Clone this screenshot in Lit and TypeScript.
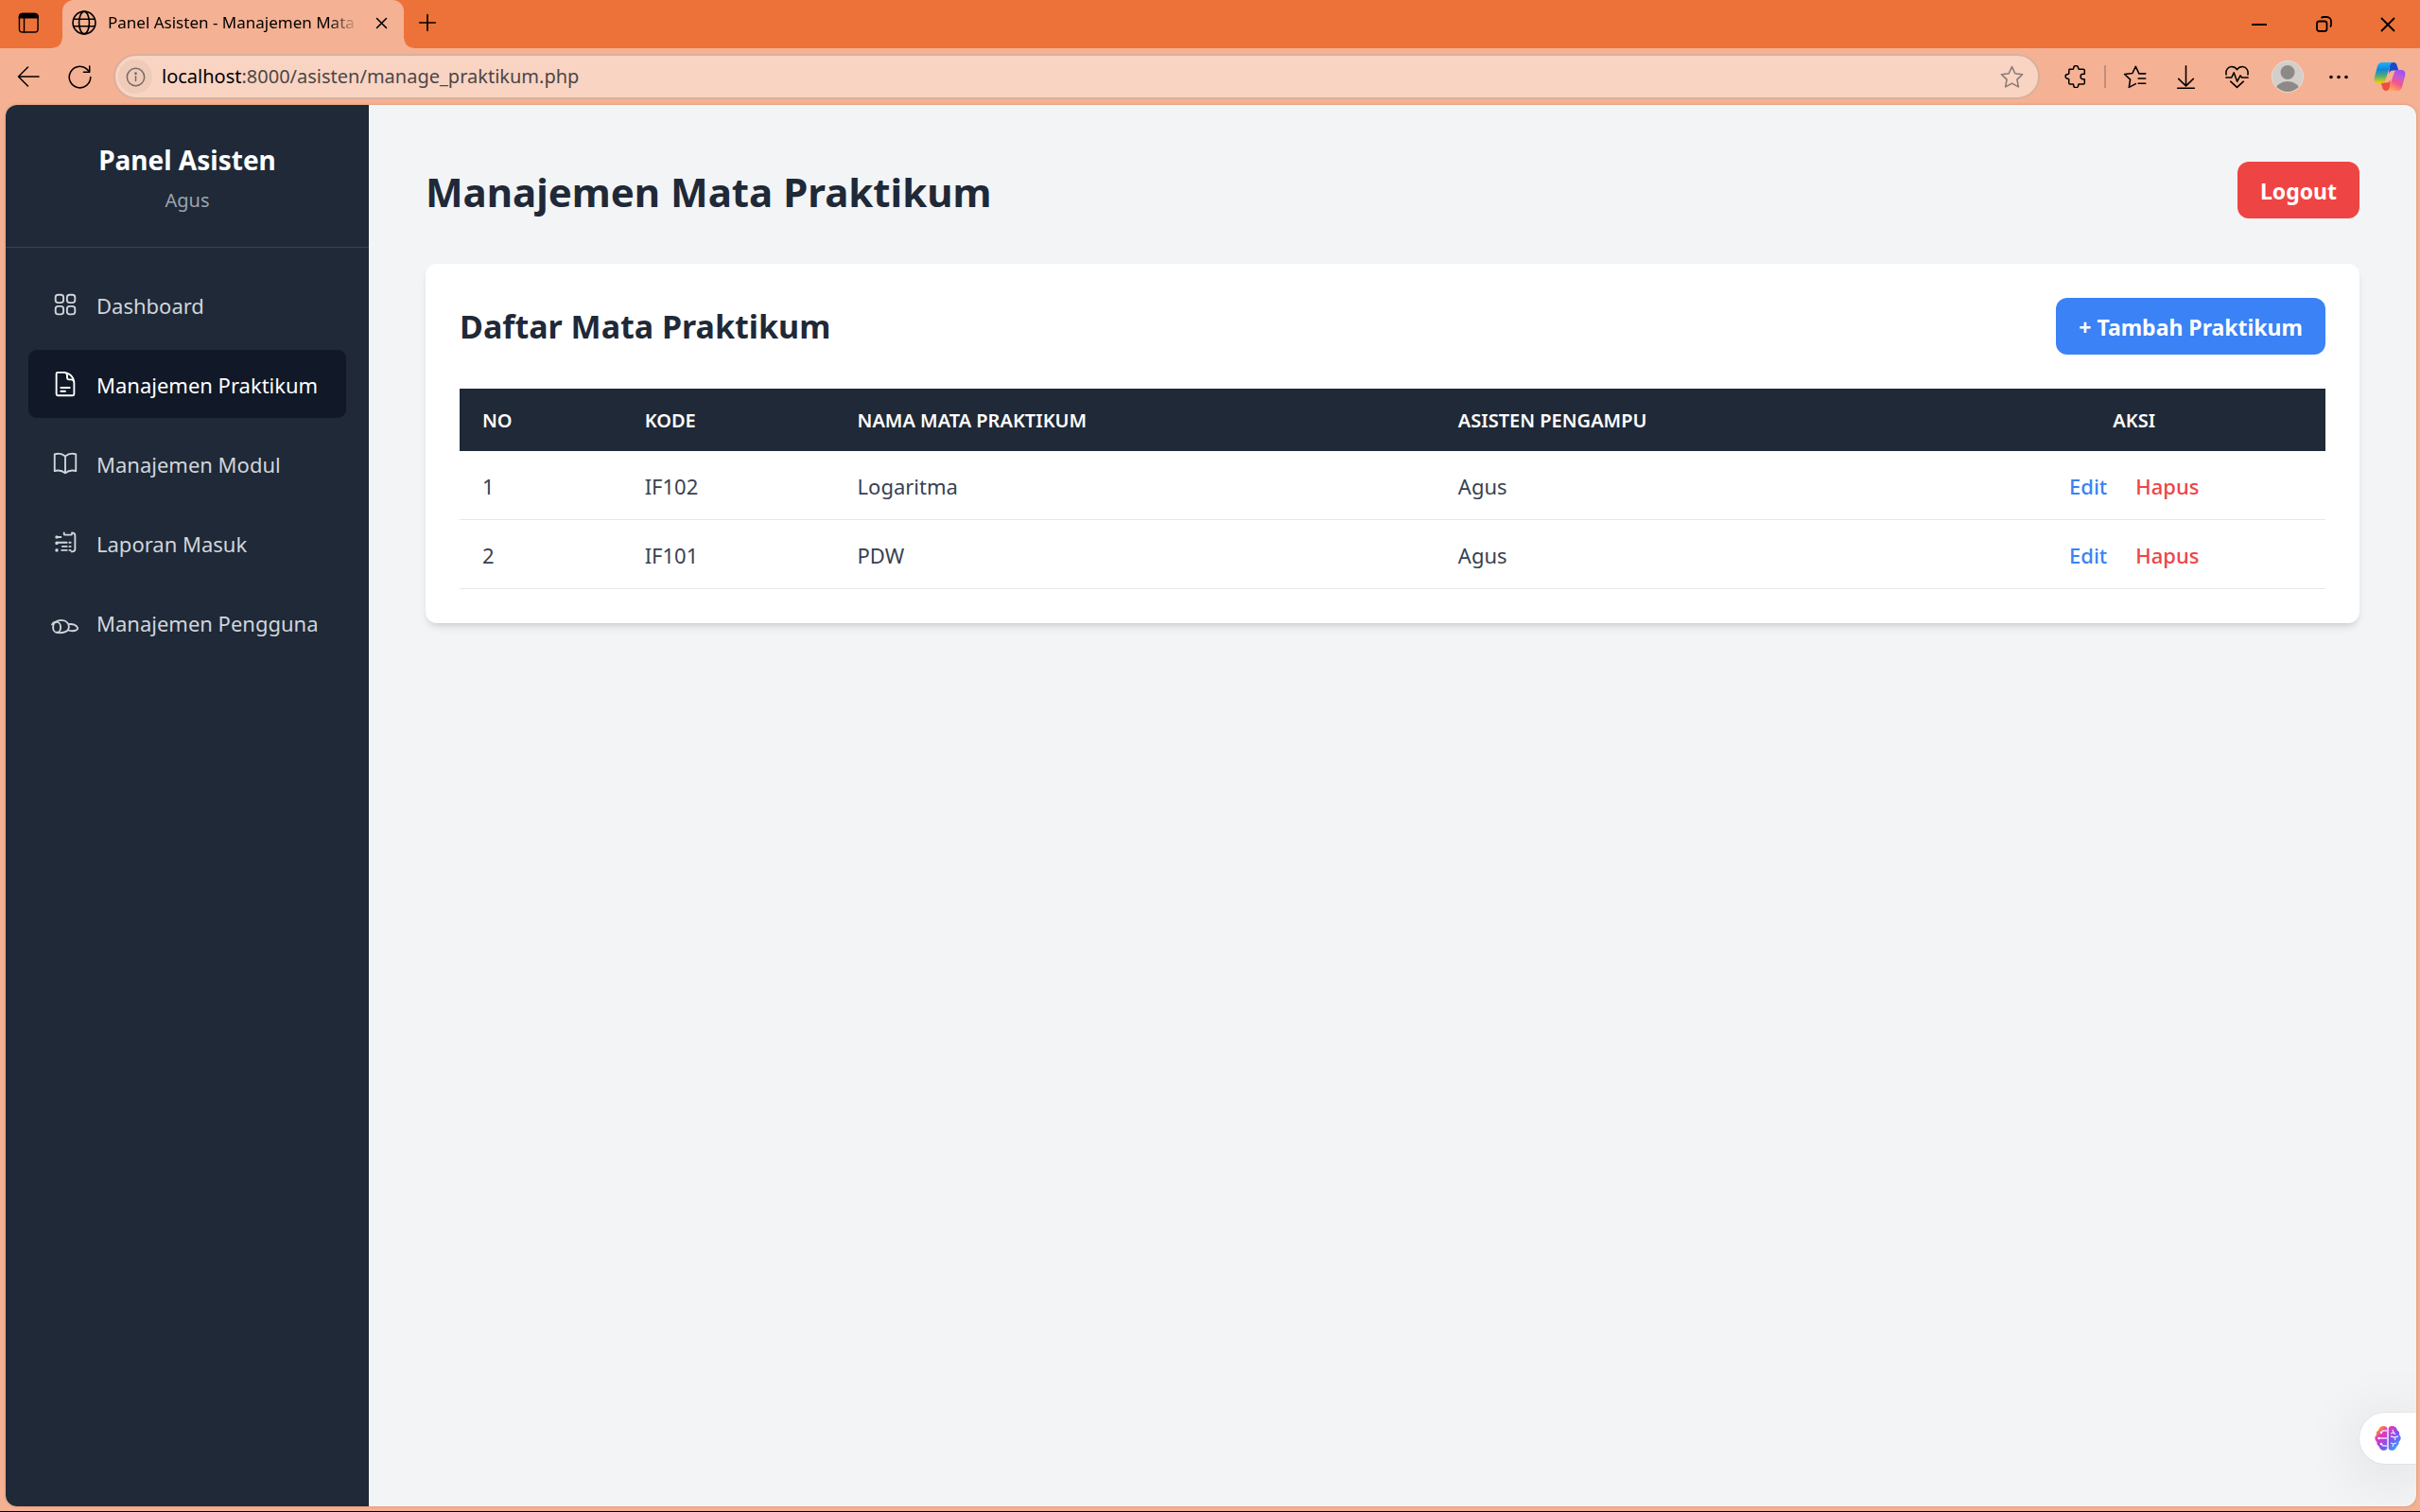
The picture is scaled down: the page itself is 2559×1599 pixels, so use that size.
import { LitElement, html, css, svg } from "lit";
import { customElement } from "lit/decorators.js";

const ui = (size: number, body: unknown, sw = 1.5) => html`<svg class="icon" width=${size} height=${size} viewBox="0 0 24 24" fill="none" stroke="currentColor" stroke-width=${sw} stroke-linecap="round" stroke-linejoin="round" aria-hidden="true">${body}</svg>`;

const icons = {
  tabs: svg`<rect x="1.500" y="1.500" width="20.500" height="20.500" rx="3.500"/><path d="M1.500 6V5A3.500 3.500 0 0 1 5 1.500h13.500A3.500 3.500 0 0 1 22 5v1z" fill="currentColor"/><path d="M6.800 6v16"/>`,
  globe: svg`<circle cx="12" cy="12" r="11"/><ellipse cx="12" cy="12" rx="5" ry="11"/><path d="M2 8.500h20M2 15.500h20"/>`,
  close: svg`<path d="M4 4l16 16M20 4L4 20"/>`,
  plus: svg`<path d="M12 2v20M2 12h20"/>`,
  back: svg`<path d="M23 12H1.500M11.500 2L1.500 12l10 10"/>`,
  reload: svg`<path d="M22.800 12a10.800 10.800 0 1 1-3.600-8l2.600 2.800M21.800 1v6h-6"/>`,
  info: svg`<circle cx="12" cy="12" r="10.500"/><path d="M12 11v5.500"/><circle cx="12" cy="7.600" r=".7" fill="currentColor"/>`,
  star: svg`<path d="M12 1.500l3.200 6.900 7.500.9-5.500 5.200 1.400 7.500L12 18.300 5.400 22l1.400-7.500L1.300 9.300l7.500-.9z"/>`,
  puzzle: svg`<path d="M5 4.200h4.200c.5-.3.500-.6.500-1.200a2.500 2.500 0 0 1 5 0c0 .6 0 .9.500 1.200H20a1.300 1.300 0 0 1 1.300 1.300v3.800h-1.500a2.700 2.700 0 0 0 0 5.400h1.500v4a1.300 1.300 0 0 1-1.300 1.300h-4.800c-.5.300-.5.600-.5 1.200a2.500 2.500 0 0 1-5 0c0-.6 0-.9-.5-1.200H6A1.300 1.300 0 0 1 4.700 18.700v-4c-.3-.5-.6-.5-1.200-.5a2.400 2.400 0 0 1 0-4.800c.6 0 .9 0 1.200-.5z"/>`,
  favs: svg`<path d="M22.800 8.500h-6.600L12.800 1.200 9.500 8.200l-8 .9 5.800 5.400L6 22.500l6.800-3.700M15.500 13.500h7.300M15.500 18.500h7.300"/>`,
  download: svg`<path d="M12 .8v20M4.500 13.800l7.500 7.200 7.500-7.200M3.500 23.200h17"/>`,
  heart: svg`<path d="M1 9.500C.2 4.800 3 1.500 6.500 1.500c2.800 0 4.500 1.500 5.500 3 1-1.500 2.700-3 5.500-3 3.500 0 6.300 3.300 5.500 8M.8 12.500h5.700l2.300-5 3.400 9 3.200-6 1.600 2h6.200M5.500 16.500L12 22.500l6.500-6"/>`,
};

const nav = [
  { label: "Dashboard", icon: svg`<path d="M3.750 6A2.250 2.250 0 0 1 6 3.750h2.250A2.250 2.250 0 0 1 10.500 6v2.250a2.250 2.250 0 0 1-2.250 2.250H6a2.250 2.250 0 0 1-2.250-2.250V6zM3.750 15.750A2.250 2.250 0 0 1 6 13.500h2.250a2.250 2.250 0 0 1 2.250 2.250V18a2.250 2.250 0 0 1-2.250 2.250H6A2.250 2.250 0 0 1 3.750 18v-2.250zM13.500 6a2.250 2.250 0 0 1 2.250-2.250H18A2.250 2.250 0 0 1 20.250 6v2.250A2.250 2.250 0 0 1 18 10.500h-2.250a2.250 2.250 0 0 1-2.250-2.250V6zM13.500 15.750a2.250 2.250 0 0 1 2.250-2.250H18a2.250 2.250 0 0 1 2.250 2.250V18A2.250 2.250 0 0 1 18 20.250h-2.250A2.250 2.250 0 0 1 13.500 18v-2.250z"/>` },
  { label: "Manajemen Praktikum", active: true, icon: svg`<path d="M19.500 11.250c0-1.700-.9-3-2.800-3h-1.800A1.300 1.300 0 0 1 13.600 7V5.200c0-1.700-.9-2.950-2.600-2.950M8.250 15.200h7.500m-7.500 3H12M10.500 2.250H5.625c-.621 0-1.125.504-1.125 1.125v17.250c0 .621.504 1.125 1.125 1.125h12.750c.621 0 1.125-.504 1.125-1.125V11.250a9 9 0 0 0-9-9z"/>` },
  { label: "Manajemen Modul", icon: svg`<path d="M12 6.042A8.967 8.967 0 0 0 6 3.750c-1.052 0-2.062.180-3 .512v14.250A8.987 8.987 0 0 1 6 18c2.305 0 4.408.867 6 2.292m0-14.250a8.966 8.966 0 0 1 6-2.292c1.052 0 2.062.180 3 .512v14.250A8.987 8.987 0 0 0 18 18a8.967 8.967 0 0 0-6 2.292m0-14.250v14.250"/>` },
  { label: "Laporan Masuk", icon: svg`<path d="M11 3.500v1c0 .5.300.8.800.8h5c.5 0 .8-.3.800-.8v-1c1.800 0 2.700.9 2.700 2.500v11.200c0 1.500-.8 2.300-2.400 2.300h-.6M5 7.200h3.300M5 11.800h8.300M15.500 11.800h1M9.500 15.100h3.800M15.500 15.100h1M9 18.300h4.300M15.500 18.300h1"/><path d="M4.300 6.700h1v1h-1zM4.300 11.800h1v1h-1zM4.300 17.800h1v1h-1z"/>` },
  { label: "Manajemen Pengguna", icon: svg`<ellipse cx="4.900" cy="16.300" rx="3.200" ry="4.400"/><path d="M.8 14c.5-1.200 1.600-2 3-2.200 2.500-1.900 7.500-2.200 10 .6 2.100 2.500 1.500 5.900-.8 7.300-2.300 1.300-5.400 1.500-8.200.9M14.800 13.800c3.300-.8 6.700.7 7.700 3 .4 1.800-2.200 2.600-4.500 2.600-1.600 0-2.900-.3-3.600-.9"/>` },
];

const rows = [
  { kode: "IF102", nama: "Logaritma", asisten: "Agus" },
  { kode: "IF101", nama: "PDW", asisten: "Agus" },
];

@customElement("browser-chrome")
class BrowserChrome extends LitElement {
  static styles = css`
    :host { display: block; background: #f5b193; color: #000; }
    * { box-sizing: border-box; }
    button { border: 0; background: none; padding: 0; margin: 0; color: inherit; font: inherit; display: grid; place-items: center; }
    svg { display: block; flex: none; }
    .tabs { display: flex; align-items: flex-start; height: 51px; background: #ed7239; }
    .workspaces { width: 54px; height: 48px; padding-left: 6px; }
    .tab { position: relative; display: flex; align-items: center; width: 361px; height: 51px; margin-left: 12px; padding: 0 8px 3px 10px; background: #f5b193; border-radius: 12px 12px 0 0; }
    .tab::before, .tab::after { content: ""; position: absolute; bottom: 0; width: 10px; height: 10px; }
    .tab::before { left: -10px; background: radial-gradient(circle at 0 0, transparent 9px, #f5b193 10px); }
    .tab::after { right: -10px; background: radial-gradient(circle at 100% 0, transparent 9px, #f5b193 10px); }
    .title { flex: 1; min-width: 0; margin-left: 12px; font-size: 17px; line-height: 24px; white-space: nowrap; overflow: hidden; mask-image: linear-gradient(90deg, #000 88%, transparent); }
    .shut { width: 32px; height: 32px; margin-left: 8px; }
    .new { width: 50px; height: 48px; }
    .window { margin-left: auto; display: flex; }
    .window button { width: 68px; height: 51px; }
    .bar { display: flex; align-items: center; height: 60px; padding: 0 5px 0 12px; }
    .nav { width: 36px; height: 36px; margin-right: 18px; }
    .address { flex: 1; min-width: 0; display: flex; align-items: center; height: 48px; padding: 0 12px 0 3px; border: 2px solid #d9b09d; border-radius: 24px; background: #f9d4c3; }
    .badge { width: 36px; height: 36px; border-radius: 50%; background: #efcbb9; color: #776862; }
    .url { flex: 1; margin-left: 10px; font-size: 20px; line-height: 28px; color: #4c4746; }
    .url b { font-weight: 400; color: #000; }
    .fav { color: #8b7a73; width: 32px; height: 36px; }
    .tools { display: flex; align-items: center; margin-left: 11px; }
    .tools button { width: 54px; height: 44px; }
    .rule { width: 2px; height: 24px; background: #c38d76; margin: 0 3px; }
  `;
  render() {
    return html`
      <div class="tabs">
        <button class="workspaces" aria-label="Tab actions">${ui(23, icons.tabs)}</button>
        <div class="tab">
          ${ui(26, icons.globe)}
          <span class="title">Panel Asisten - Manajemen Mata Praktikum</span>
          <button class="shut" aria-label="Close tab">${ui(15, icons.close, 2.5)}</button>
        </div>
        <button class="new" aria-label="New tab">${ui(20, icons.plus, 2)}</button>
        <div class="window">
          <button aria-label="Minimize"><svg width="16" height="16" viewBox="0 0 16 16"><path d="M0 8h16" stroke="#000" stroke-width="2"/></svg></button>
          <button aria-label="Restore"><svg width="17" height="17" viewBox="0 0 17 17" fill="none" stroke="#000" stroke-width="1.800"><rect x="1" y="5.500" width="10.500" height="10.500" rx="2.500"/><path d="M5.500 2c.8-.7 1.500-1 2.500-1h3.500A4.500 4.500 0 0 1 16 5.500V9c0 1-.3 1.800-1 2.500"/></svg></button>
          <button aria-label="Close"><svg width="16" height="16" viewBox="0 0 16 16" stroke="#000" stroke-width="1.800"><path d="M1 1l14 14M15 1L1 15"/></svg></button>
        </div>
      </div>
      <div class="bar">
        <button class="nav" aria-label="Back">${ui(24, icons.back)}</button>
        <button class="nav" aria-label="Refresh">${ui(25, icons.reload)}</button>
        <div class="address">
          <button class="badge" aria-label="Site information">${ui(21, icons.info, 1.7)}</button>
          <span class="url"><b>localhost</b>:8000/asisten/manage_praktikum.php</span>
          <button class="fav" aria-label="Add to favorites">${ui(25, icons.star)}</button>
        </div>
        <div class="tools">
          <button aria-label="Extensions">${ui(24, icons.puzzle)}</button>
          <span class="rule"></span>
          <button aria-label="Favorites">${ui(25, icons.favs)}</button>
          <button aria-label="Downloads">${ui(25, icons.download)}</button>
          <button aria-label="Browser essentials">${ui(25, icons.heart)}</button>
          <button aria-label="Profile"><svg width="34" height="34" viewBox="0 0 34 34"><defs><clipPath id="pf"><circle cx="17" cy="17" r="16"/></clipPath></defs><circle cx="17" cy="17" r="16.500" fill="#d2cfca" stroke="#e5ddd6"/><g clip-path="url(#pf)" fill="#8d8986"><circle cx="17" cy="12.500" r="7.500"/><ellipse cx="17" cy="32" rx="13" ry="10"/></g></svg></button>
          <button aria-label="Settings and more"><svg width="20" height="5" viewBox="0 0 20 5"><circle cx="2" cy="2.500" r="1.800"/><circle cx="10" cy="2.500" r="1.800"/><circle cx="18" cy="2.500" r="1.800"/></svg></button>
          <button aria-label="Copilot"><svg width="34" height="32" viewBox="0 0 34 32">
            <defs>
              <linearGradient id="ca" x1="0" y1="0" x2="0" y2="1"><stop offset="0" stop-color="#18b5f5"/><stop offset=".35" stop-color="#1184dd"/><stop offset=".65" stop-color="#4fae72"/><stop offset="1" stop-color="#f7cf05"/></linearGradient>
              <linearGradient id="cb" x1=".8" y1="0" x2=".3" y2="1"><stop offset="0" stop-color="#9a50f5"/><stop offset=".3" stop-color="#c05ad8"/><stop offset=".6" stop-color="#f3568a"/><stop offset="1" stop-color="#ffad5a"/></linearGradient>
            </defs>
            <path d="M17 1h4c2 0 3 1 3.600 3l1.700 5.500h-5.500c-2.500 0-3.800 1-4.600 3.500z" fill="#1b48cc"/>
            <path d="M17 31h-4c-2 0-3-1-3.600-3l-1.700-5.500h5.500c2.500 0 3.800-1 4.600-3.500z" fill="#ee4f3c"/>
            <path d="M9 1h12c-2 0-2.800 1-3.500 3l-4.800 15c-.8 2.500-2 4-4.200 4H4.500C1.500 23 0 20.500.8 17L4 5c.8-2.700 2.500-4 5-4z" fill="url(#ca)"/>
            <path d="M25 31H13c2 0 2.800-1 3.500-3l4.800-15c.8-2.500 2-4 4.200-4h4c3 0 4.500 2.500 3.700 6L30 27c-.8 2.700-2.500 4-5 4z" fill="url(#cb)"/>
          </svg></button>
        </div>
      </div>`;
  }
}

@customElement("app-root")
class AppRoot extends LitElement {
  static styles = css`
    :host { display: flex; flex-direction: column; min-height: 100vh; box-sizing: border-box; background: #f5b193; border-bottom: 1px solid #000; font-family: "Segoe UI", "Noto Sans", "Open Sans", sans-serif; }
    * { box-sizing: border-box; }
    a { text-decoration: none; color: inherit; }
    h1, h2, p { margin: 0; }
    svg { display: block; flex: none; }
    .page { flex: 1; display: flex; margin: 0 4px 5px 6px; border-radius: 12px; overflow: hidden; background: #f3f4f6; box-shadow: 0 0 3px #a8583466; }
    .side { width: 384px; flex: none; background: #1f2937; color: #fff; }
    .brand { padding: 37px 24px 34px; border-bottom: 1px solid #374151; text-align: center; }
    .brand h2 { font-size: 28px; line-height: 42px; }
    .brand p { margin-top: 7px; font-size: 20px; line-height: 30px; color: #9ca3af; }
    .menu { display: flex; flex-direction: column; gap: 12px; padding: 24px; }
    .link { display: flex; align-items: center; gap: 18px; height: 72px; padding: 0 24px; border-radius: 9px; color: #d1d5db; font-size: 22px; line-height: 36px; white-space: nowrap; }
    .link span { padding-top: 2px; }
    .link.active { background: #111827; color: #fff; }
    .main { flex: 1; min-width: 0; padding: 60px; }
    .top { display: flex; justify-content: space-between; align-items: flex-start; margin-bottom: 48px; }
    .top h1 { padding-top: 4px; font-size: 42px; line-height: 56px; color: #1f2937; }
    .btn { display: flex; align-items: center; height: 60px; padding: 2px 24px 0; border-radius: 12px; color: #fff; font-size: 23px; line-height: 36px; font-weight: 700; }
    .red { background: #ef4444; }
    .blue { background: #3b82f6; }
    .card { padding: 36px; border-radius: 12px; background: #fff; box-shadow: 0 6px 9px -2px #0000001a, 0 3px 6px -3px #0000001a; }
    .head { display: flex; justify-content: space-between; align-items: center; margin-bottom: 36px; }
    .head h2 { font-size: 34px; line-height: 48px; color: #1f2937; }
    table { width: 100%; border-collapse: separate; border-spacing: 0; table-layout: fixed; color: #374151; font-size: 22px; line-height: 36px; }
    th { height: 66px; padding: 2px 24px 0; background: #1f2937; color: #fff; font-size: 20px; line-height: 30px; font-weight: 600; text-align: left; text-transform: uppercase; }
    td { height: 73px; padding: 2px 24px 0; border-bottom: 1px solid #e5e7eb; }
    .no { width: 8.7%; } .kode { width: 11.4%; } .nama { width: 32.2%; } .ast { width: 27.2%; }
    .act { text-align: center; }
    .pair { display: flex; justify-content: center; gap: 30px; font-weight: 500; }
    .edit { color: #3b82f6; } .del { color: #ef4444; }
    .float { position: fixed; right: 4px; bottom: 51px; width: 60px; height: 54px; padding: 0 0 0 16px; border: 0; border-radius: 27px 0 0 27px; background: #fff; box-shadow: 0 0 2px #0002, 0 9px 66px #00000020; clip-path: inset(-90px 0 -46px -90px); }
  `;
  render() {
    return html`
      <browser-chrome></browser-chrome>
      <div class="page">
        <aside class="side">
          <div class="brand"><h2>Panel Asisten</h2><p>Agus</p></div>
          <nav class="menu">
            ${nav.map(n => html`<a href="#" class=${n.active ? "link active" : "link"}>${ui(30, n.icon)}<span>${n.label}</span></a>`)}
          </nav>
        </aside>
        <main class="main">
          <header class="top"><h1>Manajemen Mata Praktikum</h1><a class="btn red" href="#">Logout</a></header>
          <section class="card">
            <div class="head"><h2>Daftar Mata Praktikum</h2><a class="btn blue" href="#">+ Tambah Praktikum</a></div>
            <table>
              <thead><tr><th class="no">No</th><th class="kode">Kode</th><th class="nama">Nama Mata Praktikum</th><th class="ast">Asisten Pengampu</th><th class="act">Aksi</th></tr></thead>
              <tbody>
                ${rows.map((r, i) => html`<tr><td>${i + 1}</td><td>${r.kode}</td><td>${r.nama}</td><td>${r.asisten}</td><td><div class="pair"><a class="edit" href="#">Edit</a><a class="del" href="#">Hapus</a></div></td></tr>`)}
              </tbody>
            </table>
          </section>
        </main>
      </div>
      <button class="float" aria-label="Assistant">
        <svg width="28" height="26" viewBox="0 0 28 26">
          <defs><linearGradient id="br" x1="0" y1="0" x2="1" y2="1"><stop offset=".1" stop-color="#ffa51f"/><stop offset=".3" stop-color="#e735c0"/><stop offset=".6" stop-color="#7c55f2"/><stop offset=".9" stop-color="#2fa5fa"/></linearGradient></defs>
          <path d="M13.300 2v22c-1 2-5 2.800-7 .5-1.200-1.300-1-2-2.300-3.500-1.500-1-2-2.500-1.500-4C-.3 15-.3 11 2 9.500 1.500 7 2 5.500 4 4.500 5 1 7 0 9.500 0c2 0 3 .8 3.800 2zM14.700 2v22c1 2 5 2.800 7 .5 1.200-1.300 1-2 2.300-3.500 1.500-1 2-2.500 1.500-4 2.800-2 2.800-6 .5-7.500.5-2.500 0-4-2-5C23 1 21 0 18.500 0c-2 0-3 .8-3.800 2z" fill="url(#br)"/>
          <g fill="none" stroke="#fff" stroke-opacity=".8" stroke-width="1.300"><path d="M13 5H9L7 7M4 13h9M7 19l2 2h4M17 8l3-1-1-3M20 7l2 2M17 11l4 1 4-1M21 12l1 3M17 18l3 1 3-1M20 19l-1 3"/></g>
          <g fill="#fff"><circle cx="7" cy="7" r="1.200"/><circle cx="4.500" cy="13" r="1.200"/><circle cx="7" cy="19" r="1.200"/></g>
        </svg>
      </button>`;
  }
}
